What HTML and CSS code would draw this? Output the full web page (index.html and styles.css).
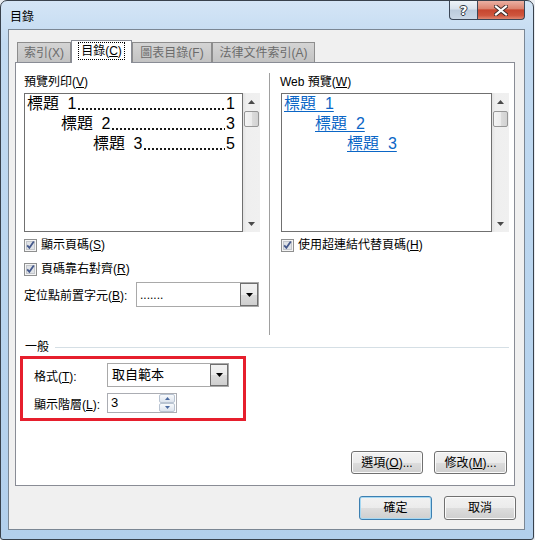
FILE: index.html
```html
<!DOCTYPE html>
<html lang="zh-Hant">
<head>
<meta charset="utf-8">
<title>目錄</title>
<link rel="stylesheet" href="styles.css">
</head>
<body>
<div class="window">
  <div class="titlebar">
    <span class="title">目錄</span>
    <div class="caption">
      <div class="cbtn help"><span class="qm">?</span></div>
      <div class="cbtn close">
        <svg width="14" height="11" viewBox="0 0 14 11"><path d="M2 1.5 L12 9.5 M12 1.5 L2 9.5" stroke="#3b2a28" stroke-width="4" stroke-linecap="square"/><path d="M2 1.5 L12 9.5 M12 1.5 L2 9.5" stroke="#ffffff" stroke-width="2.2" stroke-linecap="square"/></svg>
      </div>
    </div>
  </div>
  <div class="client">
    <div class="tabs">
      <div class="tab t1">索引(X)</div>
      <div class="tab active t2"><span class="focus">目錄(<u>C</u>)</span></div>
      <div class="tab t3">圖表目錄(F)</div>
      <div class="tab t4">法律文件索引(A)</div>
    </div>
    <div class="panel">
      <div class="cols">
        <div class="col left">
          <div class="lbl">預覽列印(<u>V</u>)</div>
          <div class="preview">
            <div class="pbox">
              <div class="pl lv1"><span class="t">標題 1</span><span class="dots"></span><span class="n">1</span></div>
              <div class="pl lv2"><span class="t">標題 2</span><span class="dots"></span><span class="n">3</span></div>
              <div class="pl lv3"><span class="t">標題 3</span><span class="dots"></span><span class="n">5</span></div>
            </div>
            <div class="scroll">
              <div class="sb-arrow"><svg width="7" height="4" viewBox="0 0 7 4"><path d="M0 4 H7 L3.5 0 Z" fill="#4a4a4a"/></svg></div>
              <div class="thumb"></div>
              <div class="sb-space"></div>
              <div class="sb-arrow"><svg width="7" height="4" viewBox="0 0 7 4"><path d="M0 0 H7 L3.5 4 Z" fill="#4a4a4a"/></svg></div>
            </div>
          </div>
          <div class="chk first">
            <svg class="cb" width="13" height="13" viewBox="0 0 13 13"><rect x="0.5" y="0.5" width="12" height="12" fill="#f4f4f4" stroke="#8e8f8f"/><rect x="2.5" y="2.5" width="8" height="8" fill="#dfe2e6" stroke="#c3c6cb"/><path d="M3.2 6.3 L5.4 8.8 L9.8 2.6" fill="none" stroke="#45598c" stroke-width="1.8"/></svg>
            <span>顯示頁碼(<u>S</u>)</span>
          </div>
          <div class="chk second">
            <svg class="cb" width="13" height="13" viewBox="0 0 13 13"><rect x="0.5" y="0.5" width="12" height="12" fill="#f4f4f4" stroke="#8e8f8f"/><rect x="2.5" y="2.5" width="8" height="8" fill="#dfe2e6" stroke="#c3c6cb"/><path d="M3.2 6.3 L5.4 8.8 L9.8 2.6" fill="none" stroke="#45598c" stroke-width="1.8"/></svg>
            <span>頁碼靠右對齊(<u>R</u>)</span>
          </div>
          <div class="ddrow">
            <span class="ddlbl">定位點前置字元(<u>B</u>):</span>
            <div class="select leader">
              <span class="val">.......</span>
              <div class="dd"><svg width="7" height="4" viewBox="0 0 7 4"><path d="M0 0 H7 L3.5 4 Z" fill="#000"/></svg></div>
            </div>
          </div>
        </div>
        <div class="col right">
          <div class="lbl">Web 預覽(<u>W</u>)</div>
          <div class="preview web">
            <div class="pbox">
              <div class="wl lv1"><span class="lnk">標題&nbsp;&nbsp;1</span></div>
              <div class="wl lv2"><span class="lnk">標題&nbsp;&nbsp;2</span></div>
              <div class="wl lv3"><span class="lnk">標題&nbsp;&nbsp;3</span></div>
            </div>
            <div class="scroll">
              <div class="sb-arrow"><svg width="7" height="4" viewBox="0 0 7 4"><path d="M0 4 H7 L3.5 0 Z" fill="#4a4a4a"/></svg></div>
              <div class="thumb"></div>
              <div class="sb-space"></div>
              <div class="sb-arrow"><svg width="7" height="4" viewBox="0 0 7 4"><path d="M0 0 H7 L3.5 4 Z" fill="#4a4a4a"/></svg></div>
            </div>
          </div>
          <div class="chk first">
            <svg class="cb" width="13" height="13" viewBox="0 0 13 13"><rect x="0.5" y="0.5" width="12" height="12" fill="#f4f4f4" stroke="#8e8f8f"/><rect x="2.5" y="2.5" width="8" height="8" fill="#dfe2e6" stroke="#c3c6cb"/><path d="M3.2 6.3 L5.4 8.8 L9.8 2.6" fill="none" stroke="#45598c" stroke-width="1.8"/></svg>
            <span>使用超連結代替頁碼(<u>H</u>)</span>
          </div>
        </div>
      </div>
      <div class="group-title"><span class="gt">一般</span><span class="gline"></span></div>
      <div class="highlight">
        <div class="frow r1">
          <span class="flbl">格式(<u>T</u>):</span>
          <div class="select fmt">
            <span class="val">取自範本</span>
            <div class="dd"><svg width="7" height="4" viewBox="0 0 7 4"><path d="M0 0 H7 L3.5 4 Z" fill="#000"/></svg></div>
          </div>
        </div>
        <div class="frow r2">
          <span class="flbl">顯示階層(<u>L</u>):</span>
          <div class="spin">
            <span class="val">3</span>
            <div class="spinbtns">
              <div class="sbtn"><svg width="5" height="3" viewBox="0 0 5 3"><path d="M0 3 H5 L2.5 0 Z" fill="#4b6aa0"/></svg></div>
              <div class="sbtn"><svg width="5" height="3" viewBox="0 0 5 3"><path d="M0 0 H5 L2.5 3 Z" fill="#4b6aa0"/></svg></div>
            </div>
          </div>
        </div>
      </div>
      <div class="panel-btns">
        <div class="btn w72">選項(<u>O</u>)...</div>
        <div class="btn w73">修改(<u>M</u>)...</div>
      </div>
    </div>
    <div class="dialog-btns">
      <div class="btn default w73 h24">確定</div>
      <div class="btn w72 h24">取消</div>
    </div>
  </div>
</div>
</body>
</html>
```
FILE: styles.css
```css
* { box-sizing: border-box; }
html, body { margin: 0; padding: 0; }
body {
  width: 535px;
  height: 540px;
  overflow: hidden;
  background: #e8ecf1;
  font-family: "Liberation Sans", "Noto Sans CJK TC", sans-serif;
  font-size: 12px;
  color: #000;
}
u { text-decoration: underline; text-underline-offset: 1px; }

.window {
  width: 534px;
  height: 540px;
  border: 1px solid #38414c;
  border-radius: 7px 7px 3px 3px;
  background: linear-gradient(180deg, #d4e5f6 0%, #c2daf1 8%, #b8d4ee 60%, #b2cfec 100%);
  padding: 0 8px 9px 7px;
  display: flex;
  flex-direction: column;
}

.titlebar {
  height: 28px;
  flex: none;
  display: flex;
  align-items: flex-start;
  justify-content: space-between;
}
.title {
  margin: 9px 0 0 2px;
  font-size: 12px;
  line-height: 14px;
  color: #000;
}
.caption { display: flex; }
.cbtn {
  height: 19px;
  border: 1px solid #3b4657;
  border-top: none;
  display: flex;
  align-items: center;
  justify-content: center;
}
.help {
  width: 28px;
  border-right: none;
  border-radius: 0 0 0 4px;
  background: linear-gradient(180deg, #eef3f8 0%, #d7e1ec 45%, #bccbdc 50%, #c9d7e6 100%);
}
.qm {
  font-family: "DejaVu Sans", sans-serif;
  font-weight: bold;
  font-size: 13px;
  line-height: 13px;
  color: #fff;
  text-shadow: 1px 0 0 #2f3640, -1px 0 0 #2f3640, 0 1px 0 #2f3640, 0 -1px 0 #2f3640;
}
.close {
  width: 48px;
  border-radius: 0 0 4px 0;
  background: linear-gradient(180deg, #eab0a3 0%, #dc8470 42%, #c7462f 50%, #cf553d 80%, #e08670 100%);
}

.client {
  flex: 1;
  border: 1px solid #7b8794;
  background: #f0f0f0;
  display: flex;
  flex-direction: column;
}

.tabs {
  display: flex;
  align-items: flex-end;
  height: 22px;
  margin: 10px 0 0 8px;
}
.tab {
  height: 20px;
  border: 1px solid #8d8d8d;
  border-bottom: none;
  background: linear-gradient(180deg, #d4d4d4, #c3c3c3);
  color: #6b6b6b;
  display: flex;
  align-items: center;
  justify-content: center;
  line-height: 14px;
  white-space: nowrap;
}
.t1 { width: 54px; }
.t2 { width: 61px; }
.t3 { width: 80px; }
.t4 { width: 103px; }
.tab.active {
  height: 23px;
  margin-bottom: -1px;
  background: #fff;
  color: #000;
  border-color: #898c95;
  position: relative;
  z-index: 2;
  padding-bottom: 2px;
}
.focus {
  outline: 1px dotted #000;
  outline-offset: 1px;
  padding: 0 1px;
  line-height: 14px;
}

.panel {
  margin-left: 6px;
  width: 500px;
  height: 424px;
  border: 1px solid #898c95;
  background: #fff;
  display: flex;
  flex-direction: column;
}

.cols { display: flex; height: 272px; flex: none; }
.col.left { width: 253px; padding: 11px 0 0 8px; }
.col.right {
  width: 245px;
  height: 262px;
  margin-top: 10px;
  border-left: 1px solid #a0a0a0;
  padding: 1px 0 0 11px;
}
.lbl { height: 16px; line-height: 16px; margin-bottom: 3px; white-space: nowrap; }
.col.right .lbl { margin-left: -1px; }

.preview { display: flex; height: 139px; width: 236px; }
.preview.web { width: 228px; }
.pbox {
  width: 219px;
  height: 139px;
  border: 1px solid #707070;
  background: #fff;
  overflow: hidden;
}
.preview.web .pbox { width: 211px; }
.scroll {
  width: 17px;
  height: 139px;
  background: linear-gradient(90deg, #e3e3e3 0%, #efefef 20%, #f0f0f0 100%);
  display: flex;
  flex-direction: column;
}
.sb-arrow { height: 17px; display: flex; align-items: center; justify-content: center; flex: none; }
.thumb {
  height: 16px;
  margin: 1px 1px 0 1px;
  border: 1px solid #969696;
  border-radius: 2px;
  background: linear-gradient(90deg, #f4f4f4 0%, #ececec 50%, #dcdcdc 51%, #d2d2d2 100%);
  flex: none;
}
.sb-space { flex: 1; }

.pl {
  display: flex;
  height: 20px;
  line-height: 20px;
  font-size: 16px;
  padding-right: 7px;
  white-space: nowrap;
}
.pl .t { white-space: pre; flex: none; word-spacing: 4px; }
.pl .dots {
  flex: 1 1 0;
  min-width: 0;
  height: 20px;
  margin: 0 1px 0 2px;
  background-image: linear-gradient(90deg, #1a1a1a 0, #1a1a1a 2px, transparent 2px);
  background-size: 4px 2px;
  background-repeat: repeat-x;
  background-position: 0 14px;
}
.pl .n { flex: none; }
.pl.lv1 { padding-left: 2px; }
.pl.lv2 { padding-left: 36px; }
.pl.lv3 { padding-left: 68px; }

.wl {
  height: 20px;
  line-height: 20px;
  font-size: 16px;
  color: #0b66c6;
  white-space: nowrap;
}
.wl .lnk { text-decoration: underline; text-underline-offset: 2px; }
.wl.lv1 { padding-left: 2px; }
.wl.lv2 { padding-left: 33px; }
.wl.lv3 { padding-left: 65px; }

.chk {
  display: flex;
  align-items: center;
  gap: 4px;
  height: 16px;
  line-height: 16px;
  white-space: nowrap;
}
.chk.first { margin-top: 5px; }
.chk.second { margin-top: 8px; }
.cb { flex: none; }

.ddrow { display: flex; align-items: center; height: 25px; margin-top: 5px; }
.ddlbl { width: 112px; flex: none; white-space: nowrap; }

.select {
  border: 1px solid #a9a9a9;
  background: #fff;
  display: flex;
  align-items: center;
  padding-left: 3px;
}
.select.leader { width: 123px; height: 25px; }
.select.fmt { width: 122px; height: 24px; padding-left: 4px; }
.select .val { line-height: 14px; }
.select.fmt .val { font-size: 13px; }
.dd {
  margin-left: auto;
  width: 18px;
  height: 100%;
  border: 1px solid #6f6f6f;
  background: linear-gradient(180deg, #f2f2f2 0%, #ebebeb 50%, #dcdcdc 51%, #cfcfcf 100%);
  display: flex;
  align-items: center;
  justify-content: center;
}

.group-title {
  display: flex;
  align-items: center;
  height: 16px;
  margin-top: 4px;
  padding-left: 9px;
  padding-right: 5px;
}
.gt { line-height: 16px; }
.gline { flex: 1; height: 1px; background: #d5dfe5; margin-left: 6px; }

.highlight {
  margin: 1px 0 0 4px;
  width: 226px;
  height: 65px;
  border: 3px solid #e61f2d;
  padding: 4px 0 0 11px;
}
.frow { display: flex; align-items: center; }
.frow.r1 { height: 24px; }
.frow.r2 { height: 20px; margin-top: 6px; }
.flbl { width: 73px; flex: none; white-space: nowrap; }

.spin {
  width: 70px;
  height: 20px;
  border: 1px solid #abadb3;
  background: #fff;
  display: flex;
  align-items: center;
  padding-left: 3px;
}
.spin .val { font-size: 13px; line-height: 14px; }
.spinbtns {
  margin-left: auto;
  margin-right: 1px;
  width: 16px;
  height: 18px;
  display: flex;
  flex-direction: column;
}
.sbtn {
  flex: 1;
  border: 1px solid #b9c4d2;
  border-radius: 2px;
  background: linear-gradient(180deg, #f8fafc, #dde4ee);
  display: flex;
  align-items: center;
  justify-content: center;
}

.panel-btns {
  margin-top: auto;
  display: flex;
  justify-content: flex-end;
  gap: 11px;
  padding: 0 7px 11px 0;
}
.btn {
  height: 23px;
  border: 1px solid #707070;
  border-radius: 3px;
  background: linear-gradient(180deg, #f2f2f2 0%, #ebebeb 50%, #dddddd 51%, #cfcfcf 100%);
  box-shadow: inset 0 0 0 1px #fbfbfb;
  display: flex;
  align-items: center;
  justify-content: center;
  line-height: 14px;
  white-space: nowrap;
}
.w72 { width: 72px; }
.w73 { width: 73px; }
.h24 { height: 24px; }
.btn.default {
  border-color: #3c7fb1;
  box-shadow: inset 0 0 0 1px #a6d8f2;
}

.dialog-btns {
  display: flex;
  justify-content: flex-end;
  gap: 12px;
  margin-top: 10px;
  padding-right: 8px;
}
```
